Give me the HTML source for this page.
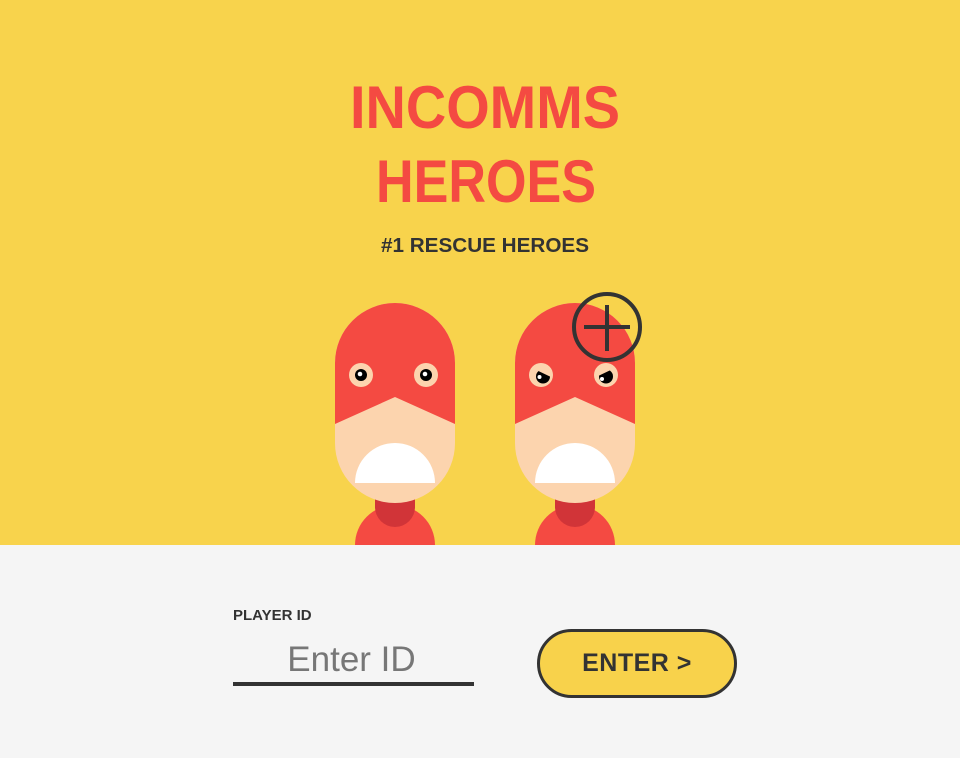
<!DOCTYPE html>
<html><head><meta charset="utf-8">
<style>
html,body{margin:0;padding:0;width:960px;height:758px;overflow:hidden;background:#f5f5f5;font-family:"Liberation Sans",sans-serif}
svg{position:absolute;left:0;top:0}
.lbl{position:absolute;left:233px;top:607px;font-size:15px;font-weight:bold;color:#333}
.inp{position:absolute;left:233px;top:638px;width:241px;height:44px;border-bottom:4px solid #333;font-size:35px;color:#777;text-align:center;line-height:44px;text-indent:-4px}
.btn{position:absolute;left:537px;top:629px;width:194px;height:63px;border:3px solid #333;border-radius:36px;background:#f8d24b;font-weight:bold;font-size:25px;color:#333;text-align:center;line-height:63px;letter-spacing:0.5px}
</style></head><body>
<svg width="960" height="758" viewBox="0 0 960 758">
<rect x="0" y="0" width="960" height="545" fill="#f8d34c"/>
<text x="485" y="128" text-anchor="middle" font-family="Liberation Sans" font-weight="bold" font-size="60" fill="#f44a42" textLength="270" lengthAdjust="spacingAndGlyphs">INCOMMS</text>
<text x="486" y="202" text-anchor="middle" font-family="Liberation Sans" font-weight="bold" font-size="60" fill="#f44a42" textLength="220" lengthAdjust="spacingAndGlyphs">HEROES</text>
<text x="485" y="252" text-anchor="middle" font-family="Liberation Sans" font-weight="bold" font-size="20" fill="#333" textLength="208" lengthAdjust="spacingAndGlyphs">#1 RESCUE HEROES</text>
<defs>
<clipPath id="yc"><rect x="0" y="0" width="960" height="545"/></clipPath>
<clipPath id="le"><polygon points="530,367 552,377.5 552,392 530,392"/></clipPath>
<clipPath id="re"><polygon points="617,367 595,377.5 595,392 617,392"/></clipPath>
<g id="hero">
<path d="M355 545 A40 40 0 0 1 435 545 Z" fill="#f44a42"/>
<path d="M375 495 L415 495 L415 507 A20 20 0 0 1 375 507 Z" fill="#d13438"/>
<rect x="335" y="303" width="120" height="200" rx="60" ry="60" fill="#fcd4ae"/>
<path d="M335 424 L335 363 A60 60 0 0 1 455 363 L455 424 L395 397 Z" fill="#f44a42"/>
<path d="M355 483 A40 40 0 0 1 435 483 Z" fill="#fff"/>
<circle cx="361" cy="375" r="12" fill="#fcd4ae"/>
<circle cx="426" cy="375" r="12" fill="#fcd4ae"/>
</g>
</defs>
<g clip-path="url(#yc)">
<use href="#hero"/>
<circle cx="361" cy="375" r="6" fill="#000"/><circle cx="360" cy="374" r="2.3" fill="#fff"/>
<circle cx="426" cy="375" r="6" fill="#000"/><circle cx="425" cy="374" r="2.3" fill="#fff"/>
<use href="#hero" x="180"/>
<circle cx="543" cy="376.5" r="7" fill="#000" clip-path="url(#le)"/>
<circle cx="539.5" cy="377" r="2" fill="#fff"/>
<circle cx="606" cy="376.5" r="7" fill="#000" clip-path="url(#re)"/>
<circle cx="602" cy="379" r="2" fill="#fff"/>
</g>
<circle cx="607" cy="327" r="33" fill="none" stroke="#333" stroke-width="4"/>
<path d="M584 327 H630 M607 305 V351" stroke="#333" stroke-width="4"/>
</svg>
<div class="lbl">PLAYER ID</div>
<div class="inp">Enter ID</div>
<div class="btn">ENTER &gt;</div>
</body></html>
